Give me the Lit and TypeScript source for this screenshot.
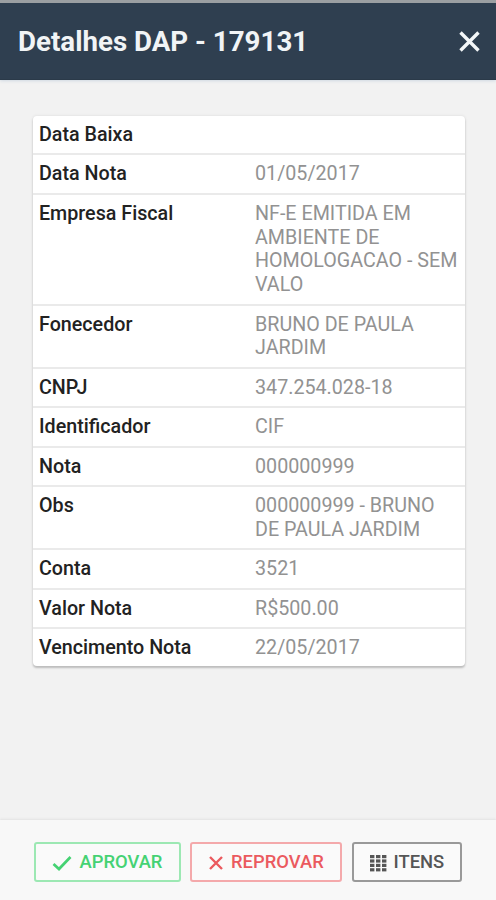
import { LitElement, html, css, svg } from "lit";
import { customElement } from "lit/decorators.js";

interface Row { label: string; lines: string[]; height: number }

const rows: Row[] = [
  { label: "Data Baixa", lines: [], height: 39 },
  { label: "Data Nota", lines: ["01/05/2017"], height: 40 },
  { label: "Empresa Fiscal", lines: ["NF-E EMITIDA EM", "AMBIENTE DE", "HOMOLOGACAO - SEM", "VALO"], height: 110.5 },
  { label: "Fonecedor", lines: ["BRUNO DE PAULA", "JARDIM"], height: 63 },
  { label: "CNPJ", lines: ["347.254.028-18"], height: 39.5 },
  { label: "Identificador", lines: ["CIF"], height: 39.5 },
  { label: "Nota", lines: ["000000999"], height: 39.5 },
  { label: "Obs", lines: ["000000999 - BRUNO", "DE PAULA JARDIM"], height: 63 },
  { label: "Conta", lines: ["3521"], height: 39.5 },
  { label: "Valor Nota", lines: ["R$500.00"], height: 39 },
  { label: "Vencimento Nota", lines: ["22/05/2017"], height: 38 },
];

@customElement("app-root")
export class AppRoot extends LitElement {
  static styles = css`
    :host { display: flex; flex-direction: column; box-sizing: border-box; width: 100%; height: 100vh; overflow: hidden;
      background: #f2f2f2; font-family: Roboto, "Liberation Sans", sans-serif; color: #222; }
    * { box-sizing: border-box; }
    header { height: 80px; flex: none; border-top: 3px solid #9b9fa2; border-bottom: 1px solid #2b3a49; background: #2f3f50;
      box-shadow: 0 1px 3px #cfd8e2; display: flex; align-items: center; justify-content: space-between; padding: 0 15px 0 18px; }
    h1 { margin: 2px 0 0; font-size: 27.7px; line-height: 34px; font-weight: 700; color: #f1f4f6; white-space: nowrap; }
    .close { width: 23px; height: 23px; margin-top: 1px; }
    main { flex: 1; padding: 36px 31px 0 33px; }
    .card { background: #fff; border-radius: 4px; box-shadow: 0 2px 2px #bdbdbd, 0 0 2px 1px #e6e6e6; height: 550px; }
    .row { display: grid; grid-template-columns: 216px 1fr; padding: 7px 0 0 6px; border-bottom: 2px solid #eaeaea;
      font-size: 19.7px; line-height: 23.6px; white-space: nowrap; }
    .row:last-child { border-bottom: 0; }
    .label { font-weight: 500; }
    .value { color: #929292; }
    footer { flex: none; height: 80px; background: #f8f8f8; box-shadow: 0 -1px 2px #e2e2e2; display: flex; gap: 9px;
      padding: 22px 0 0 34px; }
    .btn { height: 40px; border: 2px solid; border-radius: 3px; background: #fafafa; display: flex; align-items: center;
      font-family: inherit; font-size: 18.4px; font-weight: 500; padding: 0 0 2px 16px; white-space: nowrap; }
    .btn svg { flex: none; margin-top: 4px; }
    .approve { width: 147px; color: #45d273; border-color: #9ce8b3; }
    .approve svg { width: 20px; height: 16px; margin-right: 7.5px; }
    .reject { width: 152px; color: #eb5a5f; border-color: #f4a9ab; }
    .reject svg { width: 16px; height: 16px; margin-right: 7px; }
    .items { width: 110px; margin-left: 1px; color: #555; border-color: #999; }
    .items svg { width: 17px; height: 17px; margin-right: 6.5px; }
  `;

  render() {
    const dots = [0, 1, 2, 3].flatMap((y) => [0, 1, 2].map((x) =>
      svg`<rect x=${x * 6} y=${y * 4.4} width="4.4" height="3.2" fill="currentColor"></rect>`));
    return html`
      <header>
        <h1>Detalhes DAP - 179131</h1>
        <svg class="close" viewBox="0 0 23 23"><path d="M2.5 2.5L20.5 20.5M20.5 2.5L2.5 20.5" stroke="#f4f7f9" stroke-width="3.4"></path></svg>
      </header>
      <main>
        <div class="card">
          ${rows.map((r) => html`<div class="row" style="height:${r.height}px">
            <div class="label">${r.label}</div>
            <div class="value">${r.lines.map((l) => html`<div>${l}</div>`)}</div>
          </div>`)}
        </div>
      </main>
      <footer>
        <button class="btn approve"><svg viewBox="0 0 20 16"><path d="M1.5 9L7 14L18.5 2" fill="none" stroke="currentColor" stroke-width="2.7"></path></svg>APROVAR</button>
        <button class="btn reject"><svg viewBox="0 0 16 16"><path d="M2 2L14 14M14 2L2 14" stroke="currentColor" stroke-width="2.4"></path></svg>REPROVAR</button>
        <button class="btn items"><svg viewBox="0 0 17 17">${dots}</svg>ITENS</button>
      </footer>`;
  }
}
